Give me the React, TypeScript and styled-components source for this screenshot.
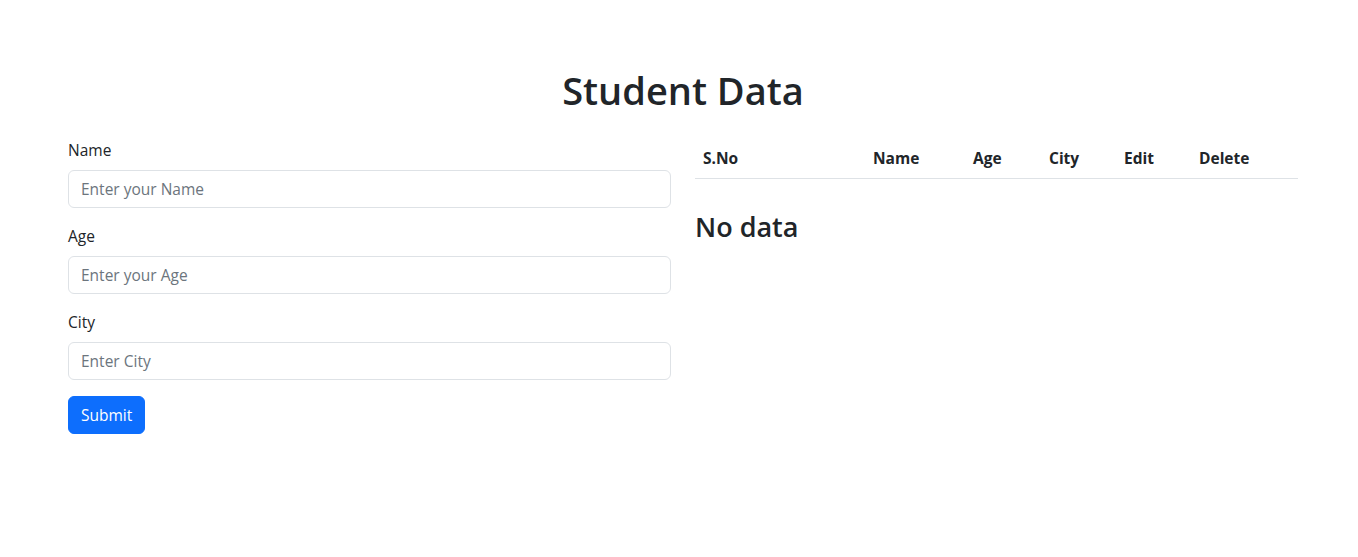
import React from "react";
import styled, { createGlobalStyle } from "styled-components";

const GlobalStyle = createGlobalStyle`
  * { box-sizing: border-box; }
  body {
    margin: 0;
    background: #fff;
    color: #212529;
    font-family: "Segoe UI", "Open Sans", "Noto Sans", Arial, sans-serif;
    font-size: 16px;
    line-height: 1.5;
  }
`;

const Page = styled.div`
  padding: 66px 60px 0 68px;
`;

const Title = styled.h1`
  margin: 0 0 24px;
  font-size: 38px;
  line-height: 48px;
  font-weight: 600;
  text-align: center;
  color: #212529;
`;

const Row = styled.div`
  display: grid;
  grid-template-columns: 1fr 1fr;
  column-gap: 24px;
`;

const Form = styled.form`
  display: flex;
  flex-direction: column;
`;

const Field = styled.div`
  display: flex;
  flex-direction: column;
  margin-bottom: 16px;
`;

const Label = styled.label`
  font-size: 15.5px;
  line-height: 24px;
  margin-bottom: 8px;
`;

const Input = styled.input`
  height: 38px;
  padding: 6px 12px;
  border: 1px solid #dee2e6;
  border-radius: 6px;
  font-family: inherit;
  font-size: 15.5px;
  line-height: 24px;
  color: #212529;
  background: #fff;
  outline: none;
  &::placeholder {
    color: #6c757d;
  }
`;

const Button = styled.button`
  align-self: flex-start;
  height: 38px;
  padding: 6px 12px;
  border: 1px solid #0d6efd;
  border-radius: 6px;
  background: #0d6efd;
  color: #fff;
  font-family: inherit;
  font-size: 15.5px;
  line-height: 24px;
  cursor: pointer;
`;

const Table = styled.table`
  width: 100%;
  border-collapse: collapse;
  margin-bottom: 32px;
`;

const Th = styled.th`
  padding: 8px;
  text-align: left;
  font-weight: 700;
  font-size: 15.5px;
  line-height: 24px;
  border-bottom: 1px solid #dee2e6;
  color: #212529;
`;

const Empty = styled.h3`
  margin: 0;
  font-size: 27px;
  line-height: 1.2;
  font-weight: 600;
  color: #212529;
`;

const columns: { label: string; width: number }[] = [
  { label: "S.No", width: 170 },
  { label: "Name", width: 100 },
  { label: "Age", width: 76 },
  { label: "City", width: 75 },
  { label: "Edit", width: 75 },
  { label: "Delete", width: 107 },
];

export default function App() {
  return (
    <>
      <GlobalStyle />
      <Page>
        <Title>Student Data</Title>
        <Row>
          <Form onSubmit={(e) => e.preventDefault()}>
            <Field>
              <Label htmlFor="name">Name</Label>
              <Input id="name" placeholder="Enter your Name" />
            </Field>
            <Field>
              <Label htmlFor="age">Age</Label>
              <Input id="age" placeholder="Enter your Age" />
            </Field>
            <Field>
              <Label htmlFor="city">City</Label>
              <Input id="city" placeholder="Enter City" />
            </Field>
            <Button type="submit">Submit</Button>
          </Form>
          <div>
            <Table>
              <colgroup>
                {columns.map((c) => (
                  <col key={c.label} style={{ width: c.width }} />
                ))}
              </colgroup>
              <thead>
                <tr>
                  {columns.map((c) => (
                    <Th key={c.label}>{c.label}</Th>
                  ))}
                </tr>
              </thead>
            </Table>
            <Empty>No data</Empty>
          </div>
        </Row>
      </Page>
    </>
  );
}
